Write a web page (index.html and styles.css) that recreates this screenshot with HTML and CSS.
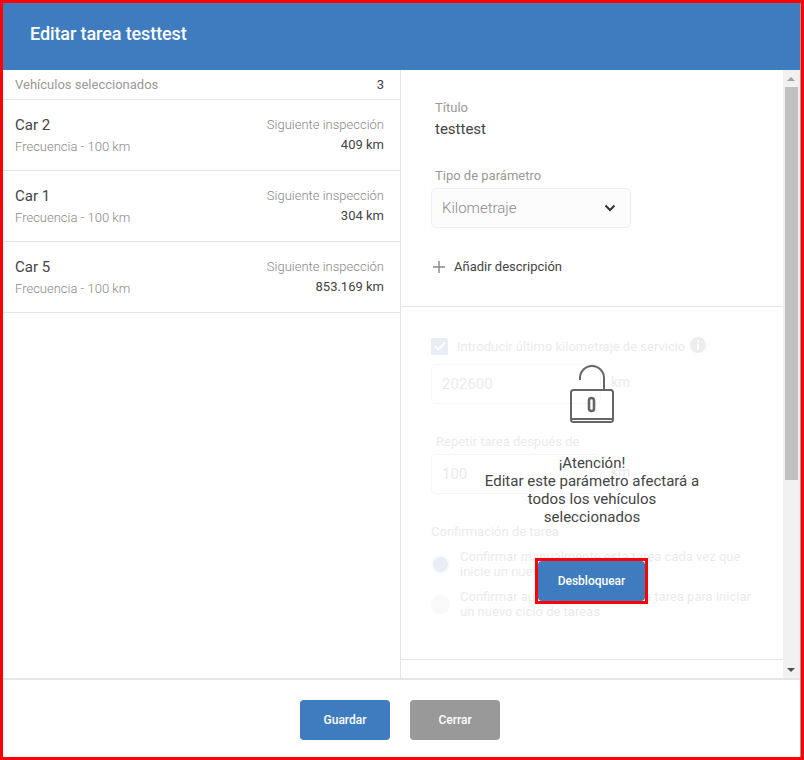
FILE: index.html
```html
<!DOCTYPE html>
<html lang="es">
<head>
<meta charset="utf-8">
<title>Editar tarea</title>
<link rel="stylesheet" href="styles.css">
</head>
<body>
<div class="frame">
  <div class="dialog">
    <header class="head">Editar tarea testtest</header>
    <main class="body">
      <section class="vehicles">
        <div class="vehicles-head"><span>Vehículos seleccionados</span><span class="count">3</span></div>
        <div class="car">
          <div class="car-main"><div class="car-name">Car 2</div><div class="car-freq">Frecuencia - 100 km</div></div>
          <div class="car-next"><div class="next-label">Siguiente inspección</div><div class="next-val">409 km</div></div>
        </div>
        <div class="car">
          <div class="car-main"><div class="car-name">Car 1</div><div class="car-freq">Frecuencia - 100 km</div></div>
          <div class="car-next"><div class="next-label">Siguiente inspección</div><div class="next-val">304 km</div></div>
        </div>
        <div class="car">
          <div class="car-main"><div class="car-name">Car 5</div><div class="car-freq">Frecuencia - 100 km</div></div>
          <div class="car-next"><div class="next-label">Siguiente inspección</div><div class="next-val">853.169 km</div></div>
        </div>
      </section>
      <section class="detail">
        <div class="pane">
          <div class="general">
            <div class="label">Título</div>
            <div class="title-val">testtest</div>
            <div class="label type-label">Tipo de parámetro</div>
            <div class="select"><span>Kilometraje</span>
              <svg class="chev" width="12" height="8" viewBox="0 0 12 8"><path d="M1.500 1.500 6 6l4.500-4.500" fill="none" stroke="#333" stroke-width="2"/></svg>
            </div>
            <div class="add">
              <svg width="12" height="12" viewBox="0 0 12 12"><path d="M6 0v12M0 6h12" stroke="#888" stroke-width="1.400"/></svg>
              <span>Añadir descripción</span>
            </div>
          </div>
          <div class="locked">
            <div class="faded">
              <div class="check-row">
                <span class="check"><svg width="12" height="10" viewBox="0 0 12 10"><path d="M1 5l3.500 3.500L11 1.500" fill="none" stroke="#fff" stroke-width="2"/></svg></span>
                <span>Introducir último kilometraje de servicio</span>
                <svg class="info" width="16" height="16" viewBox="0 0 16 16"><circle cx="8" cy="8" r="8" fill="#555"/><rect x="7" y="7" width="2" height="6" fill="#fff"/><rect x="7" y="3.500" width="2" height="2" fill="#fff"/></svg>
              </div>
              <div class="field-row"><div class="input">202600</div><span class="unit">km</span></div>
              <div class="label repeat-label">Repetir tarea después de</div>
              <div class="field-row"><div class="input">100</div><span class="unit">km</span></div>
              <div class="confirm-label">Confirmación de tarea</div>
              <div class="radio-row"><span class="radio on"></span><span>Confirmar manualmente esta tarea cada vez que inicie un nuevo ciclo de tareas</span></div>
              <div class="radio-row"><span class="radio"></span><span>Confirmar automáticamente esta tarea para iniciar un nuevo ciclo de tareas</span></div>
            </div>
          </div>
          <div class="rest"></div>
          <div class="overlay">
            <svg class="lock" width="46" height="60" viewBox="0 0 46 60" fill="none" stroke="#666" stroke-width="2">
              <path d="M11 15v-2a12 12 0 0 1 24 0v12"/>
              <rect x="2" y="25" width="42" height="32" rx="2.500"/>
              <path d="M2 54h42"/>
              <rect x="20" y="33" width="5" height="13" rx="2.500" stroke-width="2.600"/>
            </svg>
            <p class="warn">¡Atención!<br>Editar este parámetro afectará a todos los vehículos seleccionados</p>
            <div class="mark"><button class="btn unlock" type="button">Desbloquear</button></div>
          </div>
        </div>
        <div class="scrollbar">
          <span class="arrow up"></span>
          <div class="track"><div class="thumb"></div></div>
          <span class="arrow down"></span>
        </div>
      </section>
    </main>
    <footer class="foot">
      <button class="btn save" type="button">Guardar</button>
      <button class="btn close" type="button">Cerrar</button>
    </footer>
  </div>
</div>
</body>
</html>
```
FILE: styles.css
```css
* { box-sizing: border-box; }
html, body { margin: 0; padding: 0; }
body { width: 804px; height: 760px; background: #fff; font-family: Roboto, "Liberation Sans", sans-serif; color: #333; overflow: hidden; }
.frame { width: 804px; height: 760px; border: 3px solid #f00; }
.dialog { height: 100%; display: flex; flex-direction: column; border-right: 1px solid #999; }
.head { height: 67px; flex: none; background: #3e7cbf; color: #fff; font-size: 18px; font-weight: 500; letter-spacing: -.1px; line-height: 61px; padding-left: 27px; }
.body { flex: 1; display: flex; min-height: 0; }
.vehicles { width: 398px; flex: none; border-right: 1px solid #e5e5e5; }
.vehicles-head { height: 30px; display: flex; justify-content: space-between; align-items: center; padding: 0 16px 1px 12px; border-bottom: 1px solid #e5e5e5; font-size: 13px; color: #999; }
.count { color: #444; font-size: 13px; }
.car { height: 71px; display: flex; justify-content: space-between; padding: 14px 16px 0 12px; border-bottom: 1px solid #e5e5e5; }
.car-name { font-size: 15px; line-height: 22px; color: #444; }
.car-freq { font-size: 13px; font-weight: 300; line-height: 22px; color: #888; }
.car-next { text-align: right; font-size: 13px; padding-top: 1px; }
.next-label { line-height: 20px; font-weight: 300; color: #888; }
.next-val { line-height: 20px; color: #444; font-size: 13px; }
.detail { flex: 1; display: flex; min-width: 0; }
.pane { flex: 1; position: relative; min-width: 0; display: flex; flex-direction: column; }
.general { height: 237px; flex: none; padding: 29px 0 0 34px; border-bottom: 1px solid #e5e5e5; }
.label { font-size: 13px; line-height: 18px; color: #999; }
.title-val { font-size: 15px; line-height: 22px; margin-top: 1px; color: #444; }
.type-label { margin-top: 27px; }
.select { width: 200px; height: 40px; margin: 3px 0 0 -4px; padding: 0 14px 0 10px; display: flex; justify-content: space-between; align-items: center; background: #fcfcfc; border: 1px solid #f0f0f0; border-radius: 5px; font-size: 15px; font-weight: 300; color: #888; }
.add { margin: 30px 0 0 -2px; display: flex; align-items: center; gap: 9px; font-size: 13px; line-height: 18px; color: #444; }
.locked { height: 353px; flex: none; padding: 30px 30px 0 30px; border-bottom: 1px solid #e5e5e5; }
.faded { opacity: .1; font-size: 13px; color: #333; }
.check-row { display: flex; align-items: center; height: 18px; margin-bottom: 9px; }
.check { width: 17px; height: 17px; margin-right: 9px; background: #2f5fa0; border-radius: 2px; display: flex; align-items: center; justify-content: center; }
.info { margin-left: 5px; margin-top: -2px; }
.field-row { display: flex; gap: 10px; }
.input { width: 170px; height: 40px; border: 1px solid #aaa; border-radius: 5px; line-height: 38px; padding-left: 10px; font-size: 15px; }
.unit { line-height: 36px; font-size: 14px; }
.repeat-label { padding: 29px 0 0 5px; margin-bottom: 3px; color: #333; }
.confirm-label { margin-top: 29px; line-height: 18px; font-size: 13px; margin-bottom: 8px; }
.radio-row { display: flex; gap: 10px; line-height: 15px; font-size: 13px; width: 322px; }
.radio-row + .radio-row { margin-top: 10px; }
.radio { flex: none; width: 19px; height: 19px; border-radius: 50%; background: #ccc; margin-top: 6px; }
.radio.on { background: #2f5fa0; border: 2.500px solid #ddd; }
.rest { flex: 1; }
.overlay { position: absolute; left: 0; right: 0; top: 295px; display: flex; flex-direction: column; align-items: center; }
.warn { width: 220px; margin: 29px 0 0; text-align: center; font-size: 15px; line-height: 18px; color: #444; }
.mark { margin: 32px 1px 0 0; border: 3px solid #f00; background: #fff; }
.btn { display: block; border: 0; border-radius: 4px; color: #fff; font-family: inherit; font-size: 12px; font-weight: 500; height: 40px; padding: 0; }
.unlock { width: 107px; background: #3e7cbf; }
.scrollbar { width: 17px; flex: none; background: #f1f1f1; display: flex; flex-direction: column; align-items: center; position: relative; }
.track { flex: 1; width: 100%; padding: 0 2px; }
.thumb { height: 393px; background: #c1c1c1; }
.arrow { flex: none; width: 100%; height: 17px; position: relative; }
.arrow::after { content: ""; position: absolute; left: 4px; top: 7px; border: 4px solid transparent; border-top: 0; border-bottom: 4px solid #a3a3a3; }
.arrow.down::after { top: 7px; border: 4px solid transparent; border-bottom: 0; border-top: 4px solid #505050; }
.foot { height: 79px; flex: none; border-top: 2px solid #e5e5e5; display: flex; justify-content: center; gap: 20px; padding: 20px 3px 0 0; }
.save { width: 90px; background: #3e7cbf; }
.close { width: 90px; background: #999; }
```
